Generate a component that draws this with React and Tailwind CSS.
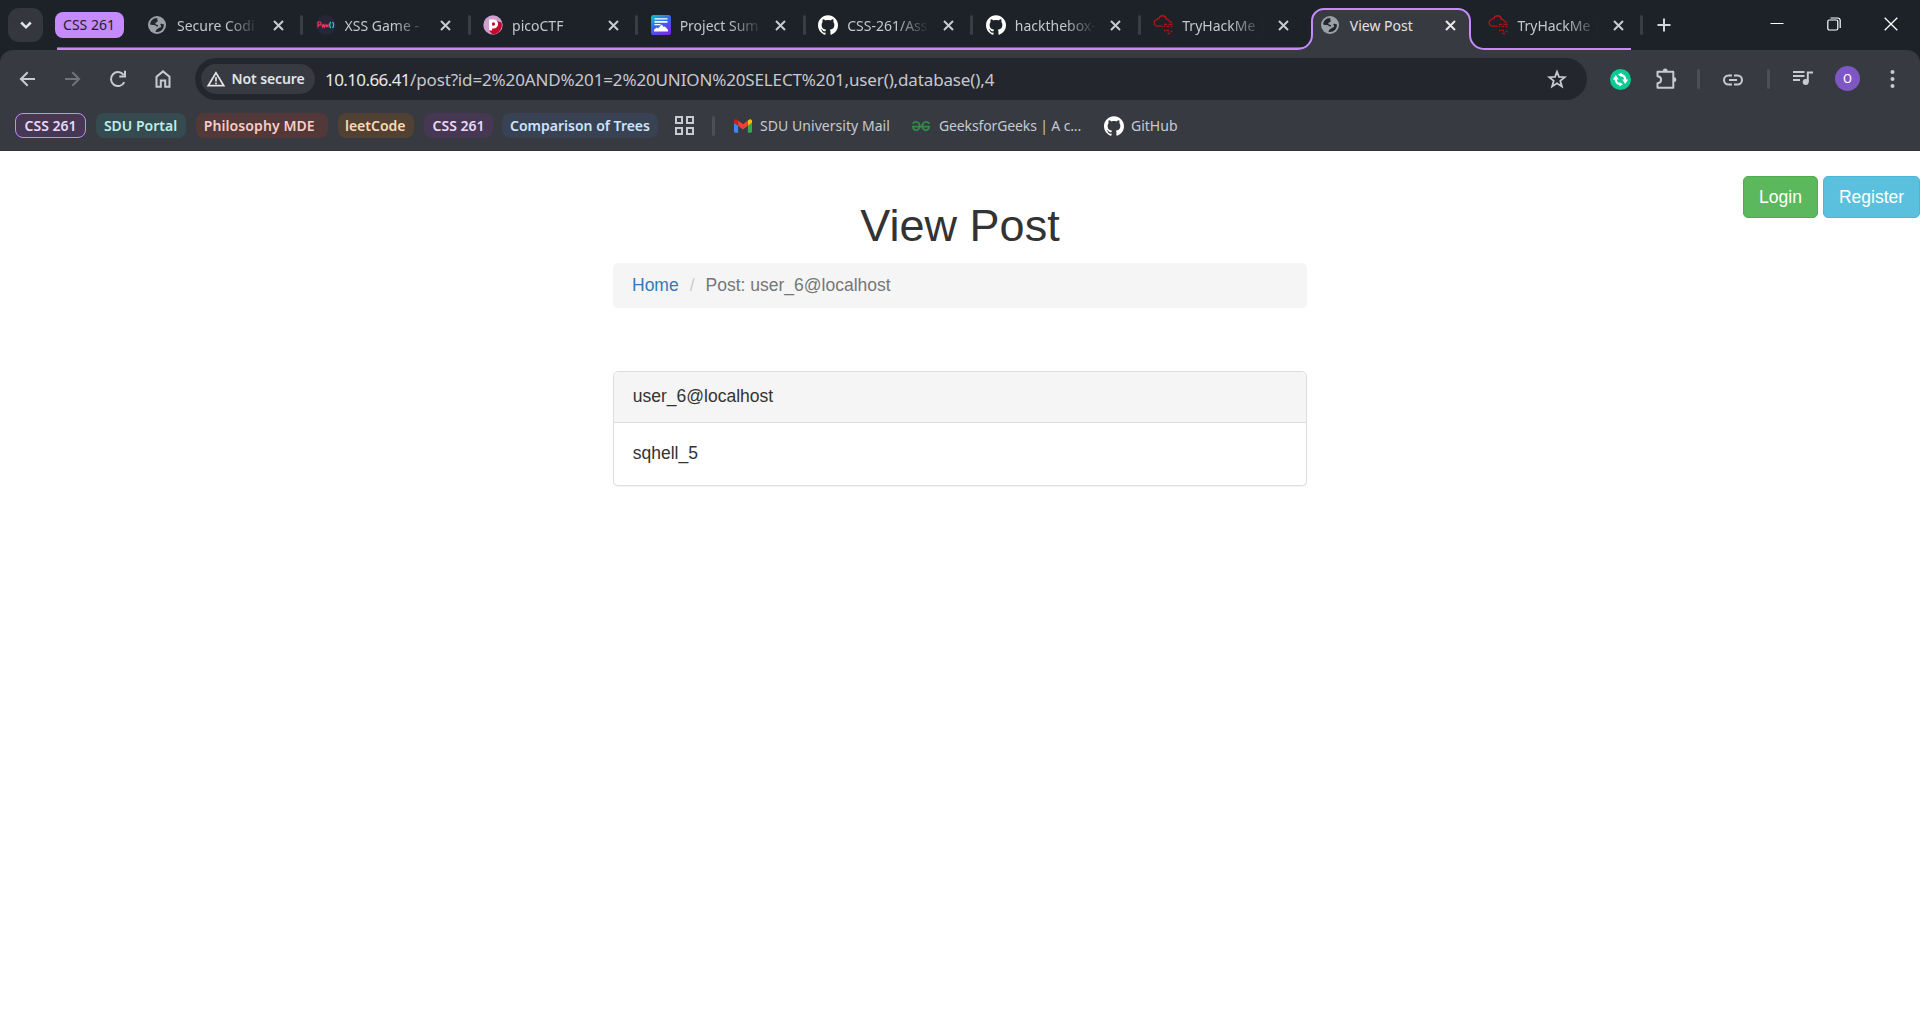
import React from "react";
import { SiGithub } from "react-icons/si";

/* ---------- icons ---------- */

const Globe = () => (
  <svg viewBox="0 0 18 18" className="-ml-0.5 size-[18px]">
    <circle cx="9" cy="9" r="9" fill="#9aa0a6" />
    <path d="M9.300 2.100C5.500 1.900 2.300 4.800 2.100 8.600c1.200.6 2.300.4 3.900.4 1.700 0 1.700 1.500 3 1.600 1.400.1 1.500-.9.700-1.500-.8-.5-2.400-.3-2.400-1.500 0-1.300 2.400-.9 2.400-2.500.1-.9-.9-1.500-.4-3Z" fill="#23272d" />
    <path d="M15.900 8.200c-1.300.3-1.700-.7-2.900-.5-.9.200-.7 1.300-.1 1.900.7.900.2 1.900-1 2-1.500.1-1.300 1.200-2.600 1.500-1.300.3-1 1.700-1.900 2.600 4.200 1.200 8.700-2 8.500-7.500Z" fill="#23272d" />
  </svg>
);

const XssIcon = () => (
  <svg viewBox="0 0 20 20" className="size-5">
    <circle cx="10" cy="10" r="10" fill="#262636" />
    <path d="M2 12.500V7h1.500a1.600 1.600 0 0 1 0 3.200H2M6 9.500l.6 2.500.9-2 .9 2 .6-2.500M10.200 12.300V10l.9 1 .9-1v2.300" fill="none" stroke="#f2355f" strokeWidth="1.200" />
    <path d="M14.700 7c-1.300 1.500-1.300 4.500 0 6M16.500 7c1.500 1.500 1.500 4.500 0 6" fill="none" stroke="#21c7c2" strokeWidth="1.300" />
  </svg>
);

const PicoIcon = () => (
  <svg viewBox="0 0 20 20" className="size-5">
    <circle cx="10" cy="10" r="9.700" fill="#cda0cf" />
    <path d="M12.500 5.500 18.500 7.500A9.600 9.600 0 0 1 9.500 19.600L6 15.500Z" fill="#c4092d" />
    <path d="M7.600 15.500V6h3a3 3 0 0 1 0 6H7.600" fill="none" stroke="#fff" strokeWidth="3" />
    <circle cx="10.300" cy="8.900" r="1.300" fill="#c4092d" />
  </svg>
);

const ProjectIcon = () => (
  <svg viewBox="0 0 20 20" className="size-5">
    <defs>
      <linearGradient id="proj" x1="0" y1="0" x2=".6" y2="1">
        <stop offset="0" stopColor="#06c8c4" />
        <stop offset=".5" stopColor="#2f6bf0" />
        <stop offset="1" stopColor="#7a2be8" />
      </linearGradient>
    </defs>
    <rect width="20" height="20" rx="2.500" fill="url(#proj)" />
    <path d="M3.500 3.200h13v1.300h-13zM3.500 6h13v1.800h-13zM3.500 9h6v1.200h-6zM3 16.600v-1.800l2.700-2.200 1.300.8 3.800-3.900 1.800 2.400 1.200-.5 3.200 3.400v1.800z" fill="#fff" />
  </svg>
);

const GitHub = () => <SiGithub className="size-5 text-white" />;

const ThmIcon = () => (
  <svg viewBox="0 0 20 20" className="size-5" fill="none" stroke="#b01317" strokeWidth="1.300">
    <path d="M9.500 11.200H4a3.300 3.300 0 0 1-.3-6.500 2.400 2.400 0 0 1 2.100-1.200A4 4 0 0 1 13.500 4.500a2.600 2.600 0 0 1 3 2.200 2.600 2.600 0 0 1 2.500 1.600" />
    <path d="M5.800 3.500A4 4 0 0 1 13 2.500l.5 2" />
    <path d="M11 9.300h3M15.500 9.300h4M10.500 11.300h1.500M13.500 11.300h2.500M17.500 11.300h2M11 15.500h1.500M13.500 15.500h2.500M17.500 16.500h2M14.500 18.500h2.500" />
  </svg>
);

const Geeks = () => (
  <svg viewBox="0 0 18 11" className="mt-px mr-px h-[11px] w-[18px]" fill="none" stroke="#2f8d46" strokeWidth="1.800">
    <path d="M.8 2.800C2.300.4 5.500.4 7 2.600c1.300 2 .8 5-1.300 6.200C3.600 9.900.9 8.600.9 5.700H17.100c0 2.900-2.700 4.200-4.800 3.100-2.100-1.200-2.600-4.200-1.300-6.200C12.500.4 15.700.4 17.200 2.800" />
  </svg>
);

const Gmail = () => (
  <svg viewBox="0 0 24 18" className="h-3.5 w-[18px]">
    <path d="M1.600 18h3.900V8.700L0 4.600v11.800C0 17.300.7 18 1.600 18Z" fill="#4285f4" />
    <path d="M18.500 18h3.900c.9 0 1.600-.7 1.600-1.600V4.600l-5.500 4.100Z" fill="#34a853" />
    <path d="M18.500 1.700v7L24 4.600V2.400C24 .4 21.700-.7 20.100.5Z" fill="#fbbc04" />
    <path d="M5.500 8.700v-7L12 6.600l6.500-4.900v7L12 13.600Z" fill="#ea4335" />
    <path d="M0 2.400v2.200l5.500 4.100v-7L3.900.5C2.300-.7 0 .4 0 2.400Z" fill="#c5221f" />
  </svg>
);

const X = () => (
  <svg viewBox="0 0 11 11" className="size-[11px]" fill="none" stroke="currentColor" strokeWidth="2">
    <path d="m1 1 9 9M10 1l-9 9" />
  </svg>
);

const Stroke = ({ className = "size-5", w = 2, children }) => (
  <svg viewBox="0 0 20 20" className={className} fill="none" stroke="currentColor" strokeWidth={w}>
    {children}
  </svg>
);

/* ---------- tab strip ---------- */

const tabs = [
  { icon: Globe, title: "Secure Codi" },
  { icon: XssIcon, title: "XSS Game -" },
  { icon: PicoIcon, title: "picoCTF" },
  { icon: ProjectIcon, title: "Project Sum" },
  { icon: GitHub, title: "CSS-261/Ass" },
  { icon: GitHub, title: "hackthebox-" },
  { icon: ThmIcon, title: "TryHackMe |" },
  { icon: Globe, title: "View Post", active: true },
  { icon: ThmIcon, title: "TryHackMe |", last: true },
];

function ActiveOutline() {
  return (
    <svg viewBox="0 0 186 50" className="absolute bottom-0 -left-[9px] h-[50px] w-[186px]">
      <path
        d="M0 49A14 14 0 0 0 14 35V21A12 12 0 0 1 26 9H160A12 12 0 0 1 172 21V35A14 14 0 0 0 186 49V50H0Z"
        fill="#383a42"
      />
      <path
        d="M0 49A14 14 0 0 0 14 35V21A12 12 0 0 1 26 9H160A12 12 0 0 1 172 21V35A14 14 0 0 0 186 49"
        fill="none"
        stroke="#c58bfd"
        strokeWidth="2"
      />
    </svg>
  );
}

function Tab({ icon: Icon, title, active, last, divider }) {
  return (
    <div className={active ? "relative z-10 w-[167.550px] shrink-0" : "relative w-[167.550px] shrink-0"}>
      {active && <ActiveOutline />}
      <div className="relative flex h-[47px] items-center pt-[3px] pl-[13px]">
        <span className="flex w-[22px] shrink-0 justify-center">
          <Icon />
        </span>
        <span
          className={
            active
              ? "mt-px ml-2 w-[82px] text-sm leading-5 whitespace-pre text-[#e3e3e6]"
              : "mt-px ml-2 w-[82px] mask-r-from-60% text-sm leading-5 whitespace-pre text-[#c3c7cf]"
          }
        >
          {title}
        </span>
        <span className={active ? "ml-[13.500px] text-[#e8e8ea]" : "ml-[13.500px] text-[#c7cad1]"}>
          <X />
        </span>
        {divider && <span className="-mr-[1.500px] ml-auto h-5 w-[3px] rounded-full bg-[#3a3d45]" />}
      </div>
      {!active && (
        <div
          className={
            last
              ? "mt-px h-0.5 w-[157px] bg-[#c58bfd]"
              : "h-[3px] border-t border-[#79599b] bg-[#c58bfd]"
          }
        />
      )}
    </div>
  );
}

function TabStrip() {
  return (
    <div className="flex h-[50px] bg-[#1d2128]">
      <button className="mt-2 ml-2 flex h-[34px] w-[35px] items-center justify-center rounded-[11px] bg-[#34373e] text-[#e3e3e6]">
        <Stroke className="size-5" w={2.500}>
          <path d="m5.200 7.500 4.800 4.800 4.800-4.800" />
        </Stroke>
      </button>
      <div className="ml-3 w-[79px]">
        <div className="mt-3 flex h-[26px] w-[69px] items-center justify-center rounded-lg bg-[#c58bfd] pr-px text-sm text-[#23202c]">
          CSS 261
        </div>
        <div className="mt-[9px] ml-0.5 h-[3px] border-t border-[#79599b] bg-[#c58bfd]" />
      </div>
      {tabs.map((t, i) => (
        <Tab key={i} {...t} divider={i !== 6 && i !== 7} />
      ))}
      <div className="flex h-[50px] items-center pl-[15px] text-[#d3d5da]">
        <svg viewBox="0 0 14 14" className="size-3.5" fill="none" stroke="currentColor" strokeWidth="2">
          <path d="M7 .5v13M.5 7h13" />
        </svg>
      </div>
      <div className="ml-auto flex h-12 items-center gap-[43px] pr-[22px] text-white">
        <svg viewBox="0 0 14 14" className="size-3.5" stroke="currentColor">
          <path d="M.5 6.500h13" />
        </svg>
        <svg viewBox="0 0 14 14" className="size-3.5" fill="none" stroke="currentColor" strokeWidth="1.200">
          <rect x=".8" y="3" width="10" height="10" rx="1.500" />
          <path d="M3.500 1h7.200a2.500 2.500 0 0 1 2.500 2.500V11" />
        </svg>
        <svg viewBox="0 0 14 14" className="size-3.5" fill="none" stroke="currentColor" strokeWidth="1.300">
          <path d="m.7.700 12.600 12.600M13.300.700.7 13.300" />
        </svg>
      </div>
    </div>
  );
}

/* ---------- toolbar ---------- */

function Toolbar() {
  return (
    <div className="flex h-[58px] items-center text-[#c7cad1]">
      <div className="flex w-[195px] items-center gap-[25px] pl-[17.500px]">
        <Stroke>
          <path d="M17 10H3.300M9.700 3.200 2.900 10l6.800 6.800" />
        </Stroke>
        <Stroke className="size-5 text-[#70737b]">
          <path d="M2 10h13.700M9.300 3.200l6.800 6.800-6.800 6.800" />
        </Stroke>
        <Stroke>
          <path d="M16.300 13.100a7 7 0 1 1-.7-7.200M17 1.800v5.700h-5.700" />
        </Stroke>
        <Stroke>
          <path d="M3.500 17.800V7.800L10 2.400l6.500 5.400v10h-4.300v-6.300H7.800v6.300Z" />
        </Stroke>
      </div>
      <div className="flex h-[42px] w-[1392px] items-center rounded-full bg-[#24262d] pr-5 pl-1.5">
        <div className="flex h-[30px] w-[114px] items-center rounded-full bg-[#383a42] pl-[5px] text-[#e3e3e6]">
          <svg viewBox="0 0 20 20" className="size-5" fill="none" stroke="currentColor" strokeWidth="1.700">
            <path d="M10 3.800 2.200 16.700h15.600Z" />
            <path d="M10 8v4.500M10 13.600v1.700" />
          </svg>
          <span className="ml-[5.500px] text-sm font-semibold tracking-[-0.1px] whitespace-nowrap">Not secure</span>
        </div>
        <div className="mt-px ml-2.5 text-[17px] leading-6 whitespace-nowrap text-[#c7c8cd]">
          <span className="tracking-[-0.590px] text-[#e8e8ea]">10.10.66.41</span>
          <span className="tracking-[-0.140px]">
            /post?id=2%20AND%201=2%20UNION%20SELECT%201,user(),database(),4
          </span>
        </div>
        <Stroke className="ml-auto size-5" w={1.800}>
          <path d="m10 2.700 2 5.200 5.800.3-4.500 3.600 1.600 5.600-4.900-3.200-4.900 3.200 1.600-5.600-4.500-3.600 5.800-.3Z" />
        </Stroke>
      </div>
      <svg viewBox="0 0 21 21" className="mt-px ml-[23px] size-[21px]">
        <circle cx="10.500" cy="10.500" r="10.500" fill="#0bcb94" />
        <path d="M5.700 9.500c0 3.500 1.600 5.300 4.300 5.700M15.300 11.500c0-3.500-1.600-5.300-4.300-5.700" fill="none" stroke="#fff" strokeWidth="2.200" />
        <path d="M2.800 10.500 5.800 6l3 4.500ZM18.200 10.500l-3 4.500-3-4.500ZM8 5.800 11.500 3.500v4.600ZM13 15.200l-3.500 2.300v-4.600Z" fill="#fff" />
      </svg>
      <svg viewBox="0 0 22 22" className="-mt-px ml-6 size-[22px]" fill="none" stroke="currentColor" strokeWidth="2">
        <path d="M2.500 3.700h15.800v16H2.500v-4.500c4.800-.5 4.800-6.500 0-7Z" strokeLinejoin="round" />
        <path d="M7.800 3a2.400 2.400 0 0 1 4.800 0ZM19 9.300a2.400 2.400 0 0 1 0 4.800Z" fill="currentColor" stroke="none" />
      </svg>
      <span className="ml-5 h-5 w-[3px] rounded-full bg-[#4c4f58]" />
      <svg viewBox="0 0 20 12" className="mt-px ml-[22.500px] h-3 w-5" fill="none" stroke="currentColor" strokeWidth="2">
        <path d="M9 1.500H5.500a4.500 4.500 0 0 0 0 9H9M11 1.500h3.500a4.500 4.500 0 0 1 0 9H11M6 6h8" />
      </svg>
      <span className="ml-[24.500px] h-5 w-[3px] rounded-full bg-[#4c4f58]" />
      <svg viewBox="0 0 20 16" className="-mt-0.5 ml-[23px] h-4 w-5" fill="none" stroke="currentColor" strokeWidth="2">
        <path d="M0 2h11.500M0 6h11.500M0 10h7M14.800 12V2.500H20" />
        <circle cx="12.700" cy="12" r="3" fill="currentColor" stroke="none" />
      </svg>
      <div className="-mt-px ml-[22px] flex size-[25px] items-center justify-center rounded-full bg-[#7e57c2] font-[Roboto] text-[13px] text-white">
        <span className="leading-none">O</span>
      </div>
      <svg viewBox="0 0 4 18" className="ml-[30px] h-[18px] w-[5px]" fill="currentColor">
        <circle cx="2" cy="2" r="2" />
        <circle cx="2" cy="9" r="2" />
        <circle cx="2" cy="16" r="2" />
      </svg>
    </div>
  );
}

/* ---------- bookmarks ---------- */

const chip = "flex h-[25px] items-center justify-center rounded-lg text-sm font-semibold whitespace-nowrap";

function Bookmarks() {
  return (
    <div className="flex h-[43px] items-center border-b border-[#2f3138] pb-[7px] pl-[15px] text-sm text-[#c7cad1]">
      <div className="flex gap-2.5">
        <div className={`${chip} w-[71px] border border-[#c58bfd] bg-[#463852] text-[#ead9fb]`}>CSS 261</div>
        <div className={`${chip} w-[90px] bg-[#354b50] pr-px text-[#bdeee6]`}>SDU Portal</div>
        <div className={`${chip} w-[131.500px] bg-[#523838] pr-[5px] tracking-[0.090px] text-[#f7cdc8]`}>Philosophy MDE</div>
        <div className={`${chip} w-[76.500px] bg-[#514133] pr-px text-[#fbd9b4]`}>leetCode</div>
        <div className={`${chip} w-[69px] bg-[#463852] text-[#ead9fb]`}>CSS 261</div>
        <div className={`${chip} -ml-px w-[156px] bg-[#384253] text-[#cfe3fc]`}>Comparison of Trees</div>
      </div>
      <svg viewBox="0 0 19 19" className="ml-[17px] size-[19px]" fill="none" stroke="currentColor" strokeWidth="2">
        <path d="M1 1h6v6H1zM12 1h6v6h-6zM1 12h6v6H1zM12 12h6v6h-6z" />
      </svg>
      <span className="mr-[19px] ml-[18px] h-5 w-[3px] rounded-full bg-[#4c4f58]" />
      <Gmail />
      <span className="ml-2 w-[151.500px] tracking-[0.050px] whitespace-nowrap">SDU University Mail</span>
      <Geeks />
      <span className="ml-[8.500px] w-[165px] tracking-[-0.130px] whitespace-nowrap">GeeksforGeeks | A c...</span>
      <GitHub />
      <span className="ml-[7px]">GitHub</span>
    </div>
  );
}

/* ---------- page ---------- */

function Page() {
  return (
    <div className="font-['Liberation_Sans',Arial,sans-serif] text-[17.500px] leading-[25px] text-[#333]">
      <div className="flex h-[67px] items-start justify-end gap-[5px] pt-[25px]">
        <button className="h-[42px] w-[75px] rounded-[5px] border border-[#4cae4c] bg-[#5cb85c] text-white">Login</button>
        <button className="h-[42px] w-[97px] rounded-[5px] border border-[#46b8da] bg-[#5bc0de] text-white">Register</button>
      </div>
      <div className="mx-auto w-[694px]">
        <h1 className="-mt-[17px] text-center text-[45px] leading-[49px] font-medium">View Post</h1>
        <div className="mt-[13px] flex h-[45px] items-center rounded-[5px] bg-[#f5f5f5] px-[19px] text-[#777]">
          <a className="text-[#337ab7]">Home</a>
          <span className="mx-[11px] text-[#ccc]">/</span>
          <span>Post: user_6@localhost</span>
        </div>
        <div className="mt-[63px] overflow-hidden rounded-[5px] border border-[#ddd] shadow-[0_1px_1px_rgba(0,0,0,0.05)]">
          <div className="h-[51px] border-b border-[#ddd] bg-[#f5f5f5] px-[18.750px] pt-3">user_6@localhost</div>
          <div className="h-[62px] px-[18.750px] pt-[18px]">sqhell_5</div>
        </div>
      </div>
    </div>
  );
}

export default function App() {
  return (
    <div className="h-[1010px] w-[1920px] overflow-hidden bg-white font-['Noto_Sans','Open_Sans',sans-serif]">
      <TabStrip />
      <div className="bg-[#1d2128]">
        <div className="rounded-t-[13px] bg-[#383a42]">
          <Toolbar />
          <Bookmarks />
        </div>
      </div>
      <Page />
    </div>
  );
}
